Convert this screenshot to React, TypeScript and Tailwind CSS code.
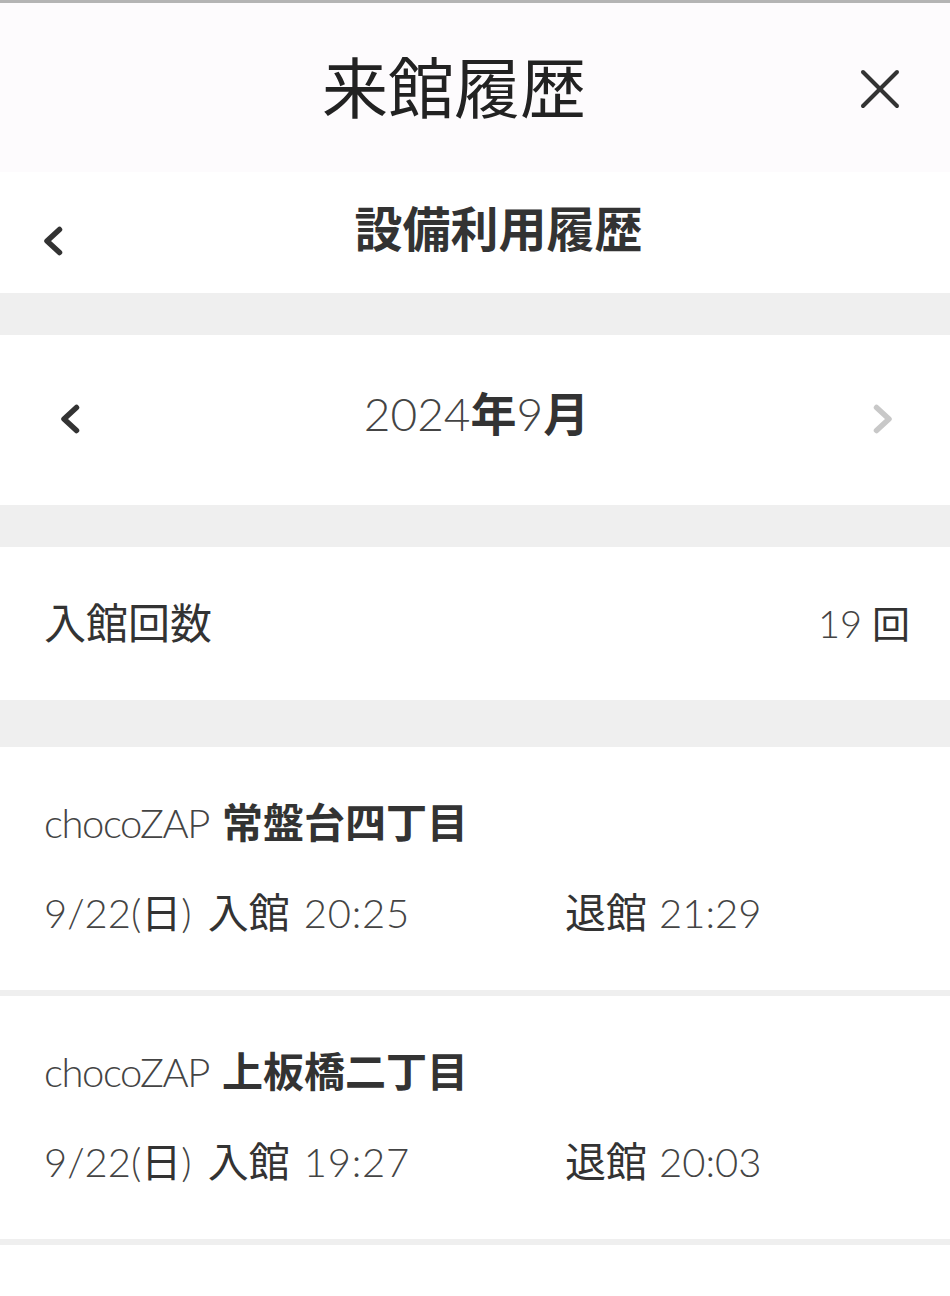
import React from "react";

const jp = "font-['Lato','Noto_Sans_CJK_JP',sans-serif]";

function Chevron({ dir, className }: { dir: "left" | "right"; className?: string }) {
  return (
    <svg viewBox="0 0 20 30" className={className} fill="none" stroke="currentColor" strokeWidth={5.5} strokeLinecap="round" strokeLinejoin="round">
      {dir === "left" ? <polyline points="16.5,3.5 4,15 16.5,26.5" /> : <polyline points="3.5,3.5 16,15 3.5,26.5" />}
    </svg>
  );
}

interface Visit {
  store: string;
  date: string;
  inTime: string;
  outTime: string;
}

const visits: Visit[] = [
  { store: "常盤台四丁目", date: "9/22", inTime: "20:25", outTime: "21:29" },
  { store: "上板橋二丁目", date: "9/22", inTime: "19:27", outTime: "20:03" },
];

function VisitRow({ v }: { v: Visit }) {
  return (
    <div className="bg-white">
      <div className="pl-[44px] pt-[51px] pb-[52px] text-[#333]">
        <div className="flex items-center h-[50px] whitespace-nowrap">
          <span className="font-light text-[40px] text-[#444] tracking-[-0.035em]">chocoZAP</span>
          <span className="font-bold text-[41px] ml-[13px]">{v.store}</span>
        </div>
        <div className="flex items-center h-[50px] mt-[40px] whitespace-nowrap">
          <div className="w-[521px] flex items-center">
            <span className="font-light text-[40px] text-[#444]">{v.date}</span>
            <span className="font-light text-[40px] text-[#444]">(</span>
            <span className="text-[40px]">日</span>
            <span className="font-light text-[40px] text-[#444]">)</span>
            <span className="text-[41px] ml-[16px]">入館</span>
            <span className="font-light text-[40px] text-[#444] ml-[14px] tracking-[0.02em]">{v.inTime}</span>
          </div>
          <span className="text-[41px]">退館</span>
          <span className="font-light text-[40px] text-[#444] ml-[12px]">{v.outTime}</span>
        </div>
      </div>
      <div className="h-[6px] bg-[#efefef]" />
    </div>
  );
}

export default function App() {
  return (
    <div className={`${jp} w-[950px] min-h-[1296px] bg-white text-[#333]`}>
      <div className="h-[3px] bg-[#b4b4b4]" />
      <header className="h-[169px] bg-[#fdfbfd] flex items-center relative">
        <h1 className="flex-1 text-center text-[66px] text-[#222] leading-none -ml-[42px]">来館履歴</h1>
        <svg viewBox="0 0 40 40" className="absolute right-[50px] top-[66px] w-[40px] h-[40px] text-[#333]" fill="none" stroke="currentColor" strokeWidth={4} strokeLinecap="round">
          <line x1="3" y1="3" x2="37" y2="37" />
          <line x1="37" y1="3" x2="3" y2="37" />
        </svg>
      </header>
      <div className="h-[121px] flex items-center pl-[43px] pr-[16px]">
        <Chevron dir="left" className="w-[20px] h-[30px] mt-[17px] text-[#333]" />
        <div className="flex-1 text-center text-[48px] font-bold leading-none -mt-[8px]">設備利用履歴</div>
      </div>
      <div className="h-[42px] bg-[#efefef]" />
      <div className="h-[170px] flex items-center pl-[60px] pr-[57px]">
        <Chevron dir="left" className="w-[20px] h-[30px] mt-[-3px] text-[#333]" />
        <div className="flex-1 text-center whitespace-nowrap leading-none -mt-[12px]">
          <span className="font-light text-[46px] text-[#444]">2024</span>
          <span className="font-bold text-[46px]">年</span>
          <span className="font-light text-[46px] text-[#444]">9</span>
          <span className="font-bold text-[46px]">月</span>
        </div>
        <Chevron dir="right" className="w-[20px] h-[30px] mt-[-3px] text-[#c8c8c8]" />
      </div>
      <div className="h-[42px] bg-[#efefef]" />
      <div className="h-[153px] flex items-center justify-between pl-[44px] pr-[40px]">
        <span className="text-[42px]">入館回数</span>
        <span className="whitespace-nowrap">
          <span className="font-light text-[38px] text-[#444]">19</span>
          <span className="text-[38px] ml-[10px]">回</span>
        </span>
      </div>
      <div className="h-[47px] bg-[#efefef]" />
      {visits.map((v, i) => (
        <VisitRow key={i} v={v} />
      ))}
    </div>
  );
}
